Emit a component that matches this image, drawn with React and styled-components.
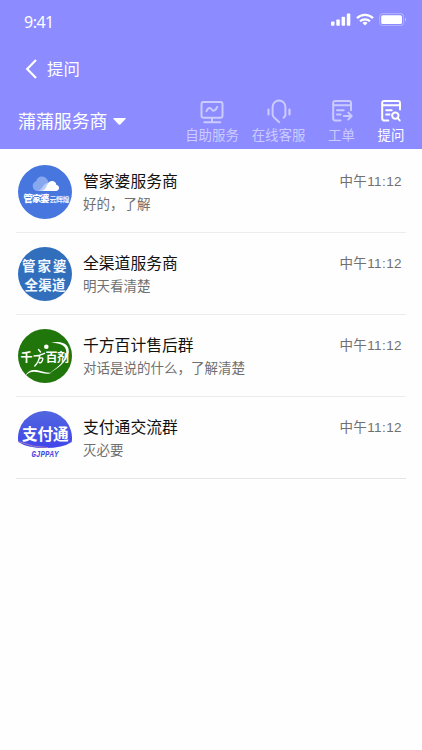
import styled, { createGlobalStyle } from "styled-components";

const GlobalStyle = createGlobalStyle`
  * {
    box-sizing: border-box;
  }
  body {
    margin: 0;
    background: #fefefe;
    font-family: "Liberation Sans", "Noto Sans CJK SC", sans-serif;
  }
`;

const Page = styled.main`
  width: 100%;
  min-height: 750px;
  background: #fefefe;
`;

const Header = styled.header`
  height: 149px;
  background: #8c8bff;
  color: #fff;
`;

const StatusBar = styled.div`
  height: 44px;
  padding: 0 15px 0 24px;
  display: flex;
  align-items: center;
  justify-content: space-between;
`;

const Clock = styled.span`
  font: 16px/20px "Noto Sans", sans-serif;
  letter-spacing: -0.5px;
`;

const StatusIcons = styled.div`
  display: flex;
  gap: 5px;
  padding-bottom: 5px;
`;

const NavBar = styled.div`
  height: 49px;
  padding-left: 25px;
  display: flex;
  align-items: center;
  gap: 9px;
  font-size: 16.4px;
  line-height: 24px;
`;

const Toolbar = styled.div`
  height: 56px;
  padding: 0 11px 0 18px;
  display: flex;
  justify-content: space-between;
`;

const Provider = styled.div`
  display: flex;
  align-items: center;
  gap: 6px;
  font-size: 17.9px;
  line-height: 26px;
  height: 57px;
`;

const Actions = styled.nav`
  display: flex;
  padding-top: 4px;
`;

const Action = styled.div`
  width: ${({ $width }) => $width}px;
  display: flex;
  flex-direction: column;
  align-items: center;
  font-size: 13.4px;
  line-height: 20px;
  gap: 1px;
  white-space: nowrap;
  color: ${({ $active }) => ($active ? "#fff" : "#cccbff")};
`;

const ChatList = styled.ul`
  margin: 0;
  padding: 2px 16px 0;
  list-style: none;
`;

const ChatRow = styled.li`
  height: 82px;
  padding: 14px 4px 0 1.5px;
  display: flex;
  border-bottom: 1px solid ${({ $last }) => ($last ? "#e6e6e6" : "#ececec")};
`;

const Body = styled.div`
  flex: 1;
  padding-left: 11.5px;
`;

const Name = styled.div`
  margin-top: 5px;
  font-size: 15.8px;
  line-height: 24px;
  color: #111;
`;

const Message = styled.div`
  font-size: 13.5px;
  line-height: 20px;
  margin-top: 1px;
  color: #707070;
`;

const Time = styled.time`
  margin-top: 7px;
  font-size: 13.5px;
  line-height: 20px;
  letter-spacing: 0.4px;
  color: #707070;
`;

const Logo = styled.svg`
  width: 54px;
  height: 54px;
  flex: none;
  font-family: "Noto Sans CJK SC", sans-serif;
`;

const SignalIcon = () => (
  <svg width="20" height="13" viewBox="0 0 20 13" fill="#fff">
    <rect x="0" y="8.5" width="3.5" height="4.2" rx="0.8" />
    <rect x="5.3" y="6.5" width="3.5" height="6.2" rx="0.8" />
    <rect x="10.6" y="3.7" width="3.5" height="9" rx="0.8" />
    <rect x="15.8" y="0.6" width="3.5" height="12.1" rx="0.8" />
  </svg>
);

const WifiIcon = () => (
  <svg width="18" height="13" viewBox="0 0 18 13" fill="none" stroke="#fff">
    <path d="M1 5.1a11.6 11.6 0 0 1 16 0" strokeWidth="2.3" />
    <path d="M4 8.3a7.2 7.2 0 0 1 10 0" strokeWidth="2.2" />
    <path d="M9 12.5 6.5 10a3.6 3.6 0 0 1 5 0z" fill="#fff" stroke="none" />
  </svg>
);

const BatteryIcon = () => (
  <svg width="28" height="13" viewBox="0 0 28 13">
    <rect x="0.6" y="0.6" width="24" height="12" rx="3" fill="none" stroke="#fff" strokeOpacity=".35" />
    <rect x="2.2" y="2.2" width="20.8" height="8.8" rx="1.6" fill="#fff" />
    <path d="M26 4.5v4.2c1.7-.8 1.7-3.4 0-4.2z" fill="#fff" opacity=".4" />
  </svg>
);

const actionIcon = {
  width: 28,
  height: 28,
  viewBox: "0 0 28 28",
  fill: "none",
  stroke: "currentColor",
  strokeWidth: 2,
  strokeLinecap: "round",
  strokeLinejoin: "round",
};

const MonitorIcon = () => (
  <svg {...actionIcon}>
    <rect x="3.5" y="5" width="21" height="15.7" rx="2" />
    <path d="M8.5 14.2c1.500-4 4-3.800 5.500-1.400 1.500 1.800 3.800.5 5.200-2.800M14 21v3.500M6.300 25.200h16" />
  </svg>
);

const HeadsetIcon = () => (
  <svg {...actionIcon}>
    <path d="M20.400 18.700V9.900a6.400 6.400 0 0 0-12.800 0v7.300q0 2 1.500 3.400l5.200 4.600M20.400 18q-.3 1.600-1.800 2.600" />
    <path d="M3.500 12.500v5M24.500 12.500v5" strokeWidth="2.2" />
  </svg>
);

const TicketIcon = () => (
  <svg {...actionIcon}>
    <path d="M12.5 23.4H7a1.8 1.8 0 0 1-1.8-1.8V5.800A1.8 1.8 0 0 1 7 4h14.2A1.8 1.8 0 0 1 23 5.800v7.400M5.300 8.300h17.500M9 13.200h6.700M9 17.600h3.600M15.800 19h7.500M20.300 15.600l3.400 3.400-3.400 3.500" />
  </svg>
);

const QuestionIcon = () => (
  <svg {...actionIcon}>
    <path d="M11.300 23.400H7a1.8 1.8 0 0 1-1.8-1.8V5.800A1.8 1.8 0 0 1 7 4h14.200A1.8 1.8 0 0 1 23 5.800v6.800M5.300 8.300h17.500M9.200 13.200h5.500M9.200 17.600h3.300M20.700 21.200l2 2.200" />
    <circle cx="18.3" cy="18.6" r="3.2" />
  </svg>
);

const CloudLogo = () => (
  <Logo viewBox="0 0 54 54">
    <circle cx="27" cy="27" r="27" fill="#4776df" />
    <path d="M19 26a5 5 0 0 1-.8-9.700c1-6.400 10-6.400 12 0L35 26z" fill="#87a8ef" />
    <path d="M19 26c5 0 6-8 11-8 3 0 4 2 4 4l-6 4z" fill="#b9cdfa" />
    <path d="M23.500 26c3.500 0 4.500-4 6.500-7.500 2.300-4.500 8.500-2.500 8.200 1.300 4 .4 3.800 6.200-.4 6.200z" fill="#fff" />
    <text x="5.500" y="37.300" fontSize="9.200" fontWeight="900" textLength="26" fill="#fff">管家婆</text>
    <text x="31.500" y="37.200" fontSize="7" fontWeight="700" textLength="20" fill="#e8efff">云辉煌</text>
  </Logo>
);

const ChannelLogo = () => (
  <Logo viewBox="0 0 54 54">
    <circle cx="27" cy="27" r="27" fill="#316fbd" />
    <g fill="#f2f8ff" fontWeight="700">
      <text x="4" y="24" fontSize="13.5" textLength="44.500">管家婆</text>
      <text x="6.500" y="42.700" fontSize="13.500" textLength="41">全渠道</text>
    </g>
    <circle cx="50.3" cy="12.7" r=".6" fill="#b9d4f1" />
  </Logo>
);

const GreenLogo = () => (
  <Logo viewBox="0 0 54 54">
    <circle cx="27" cy="27" r="27" fill="#20760b" />
    <circle cx="28.300" cy="17.700" r="2.300" fill="#fff" />
    <path d="M33 13.700C45 10.800 53.500 16 50 26c-2.600 7-9.500 13.500-18 17.500 8.500-5.500 15-12 16.200-18.500C49.500 17 43 14 33 13.700z" fill="#fff" />
    <path d="M7.500 47c2-5.300 7-6.800 13-5.500 5 1.200 9 2.700 14 2-5 2.200-9 .9-14-.2-6-1.200-10-.3-13 3.700z" fill="#fff" />
    <g fill="#fff" fontWeight="700">
      <text x="2.500" y="33" fontSize="12">千</text>
      <text x="27.500" y="33" fontSize="12" textLength="23.500">百剂</text>
    </g>
    <path d="m20.500 20.500 2 2.500M16 27c3.500 0 7-1 10.500-2.700M21.800 26.500c-.5 4-1.500 7-5 10.500M21.500 29.200c3-.8 4-.3 3 2-.8 2-1.800 3-3.300 2.300" fill="none" stroke="#fff" strokeWidth="1.4" strokeLinecap="round" />
    <circle cx="52" cy="17" r=".6" fill="#b6d8ae" />
  </Logo>
);

const PayLogo = () => (
  <Logo viewBox="0 0 54 54">
    <defs>
      <linearGradient id="payBlue" x1="0" y1="0" x2="0" y2="1">
        <stop offset="0" stopColor="#5266df" />
        <stop offset="1" stopColor="#4146ea" />
      </linearGradient>
    </defs>
    <path d="M.3 31A27 27 0 1 1 53.700 31Q45 37 27 37T.3 31z" fill="url(#payBlue)" />
    <path d="M.4 30.500Q15 36.500 30 36.600" stroke="#c28abb" strokeWidth=".8" fill="none" />
    <text x="4" y="29.200" fontSize="15.600" fontWeight="700" textLength="46.500" fill="#fff">支付通</text>
    <text x="13.500" y="46" fontFamily="Liberation Mono" fontSize="9.200" fontWeight="700" fontStyle="italic" textLength="27" lengthAdjust="spacingAndGlyphs" fill="#474ce0">GJPPAY</text>
  </Logo>
);

const actions = [
  { label: "自助服务", width: 66, Icon: MonitorIcon },
  { label: "在线客服", width: 67, Icon: HeadsetIcon },
  { label: "工单", width: 59, Icon: TicketIcon },
  { label: "提问", width: 40, Icon: QuestionIcon, active: true },
];

const chats = [
  { name: "管家婆服务商", message: "好的，了解", Avatar: CloudLogo },
  { name: "全渠道服务商", message: "明天看清楚", Avatar: ChannelLogo },
  { name: "千方百计售后群", message: "对话是说的什么，了解清楚", Avatar: GreenLogo },
  { name: "支付通交流群", message: "灭必要", Avatar: PayLogo },
];

const App = () => {
  return (
    <>
      <GlobalStyle />
      <Page>
        <Header>
          <StatusBar>
            <Clock>9:41</Clock>
            <StatusIcons>
              <SignalIcon />
              <WifiIcon />
              <BatteryIcon />
            </StatusIcons>
          </StatusBar>
          <NavBar>
            <svg width="13" height="20" viewBox="0 0 13 20" fill="none" stroke="#fff" strokeWidth="2.2">
              <path d="M11 1 2.2 10 11 19" />
            </svg>
            <span>提问</span>
          </NavBar>
          <Toolbar>
            <Provider>
              <span>蒲蒲服务商</span>
              <svg width="13" height="7" viewBox="0 0 13 7" fill="#fff">
                <path d="M.8 0h11.4q1 .1.3 1L7.3 6.5q-.8.7-1.6 0L.5 1Q-.1.1.8 0z" />
              </svg>
            </Provider>
            <Actions>
              {actions.map(({ label, width, Icon, active }) => (
                <Action key={label} $width={width} $active={active}>
                  <Icon />
                  <span>{label}</span>
                </Action>
              ))}
            </Actions>
          </Toolbar>
        </Header>
        <ChatList>
          {chats.map(({ name, message, Avatar }, i) => (
            <ChatRow key={name} $last={i === chats.length - 1}>
              <Avatar />
              <Body>
                <Name>{name}</Name>
                <Message>{message}</Message>
              </Body>
              <Time>中午11:12</Time>
            </ChatRow>
          ))}
        </ChatList>
      </Page>
    </>
  );
};

export default App;
